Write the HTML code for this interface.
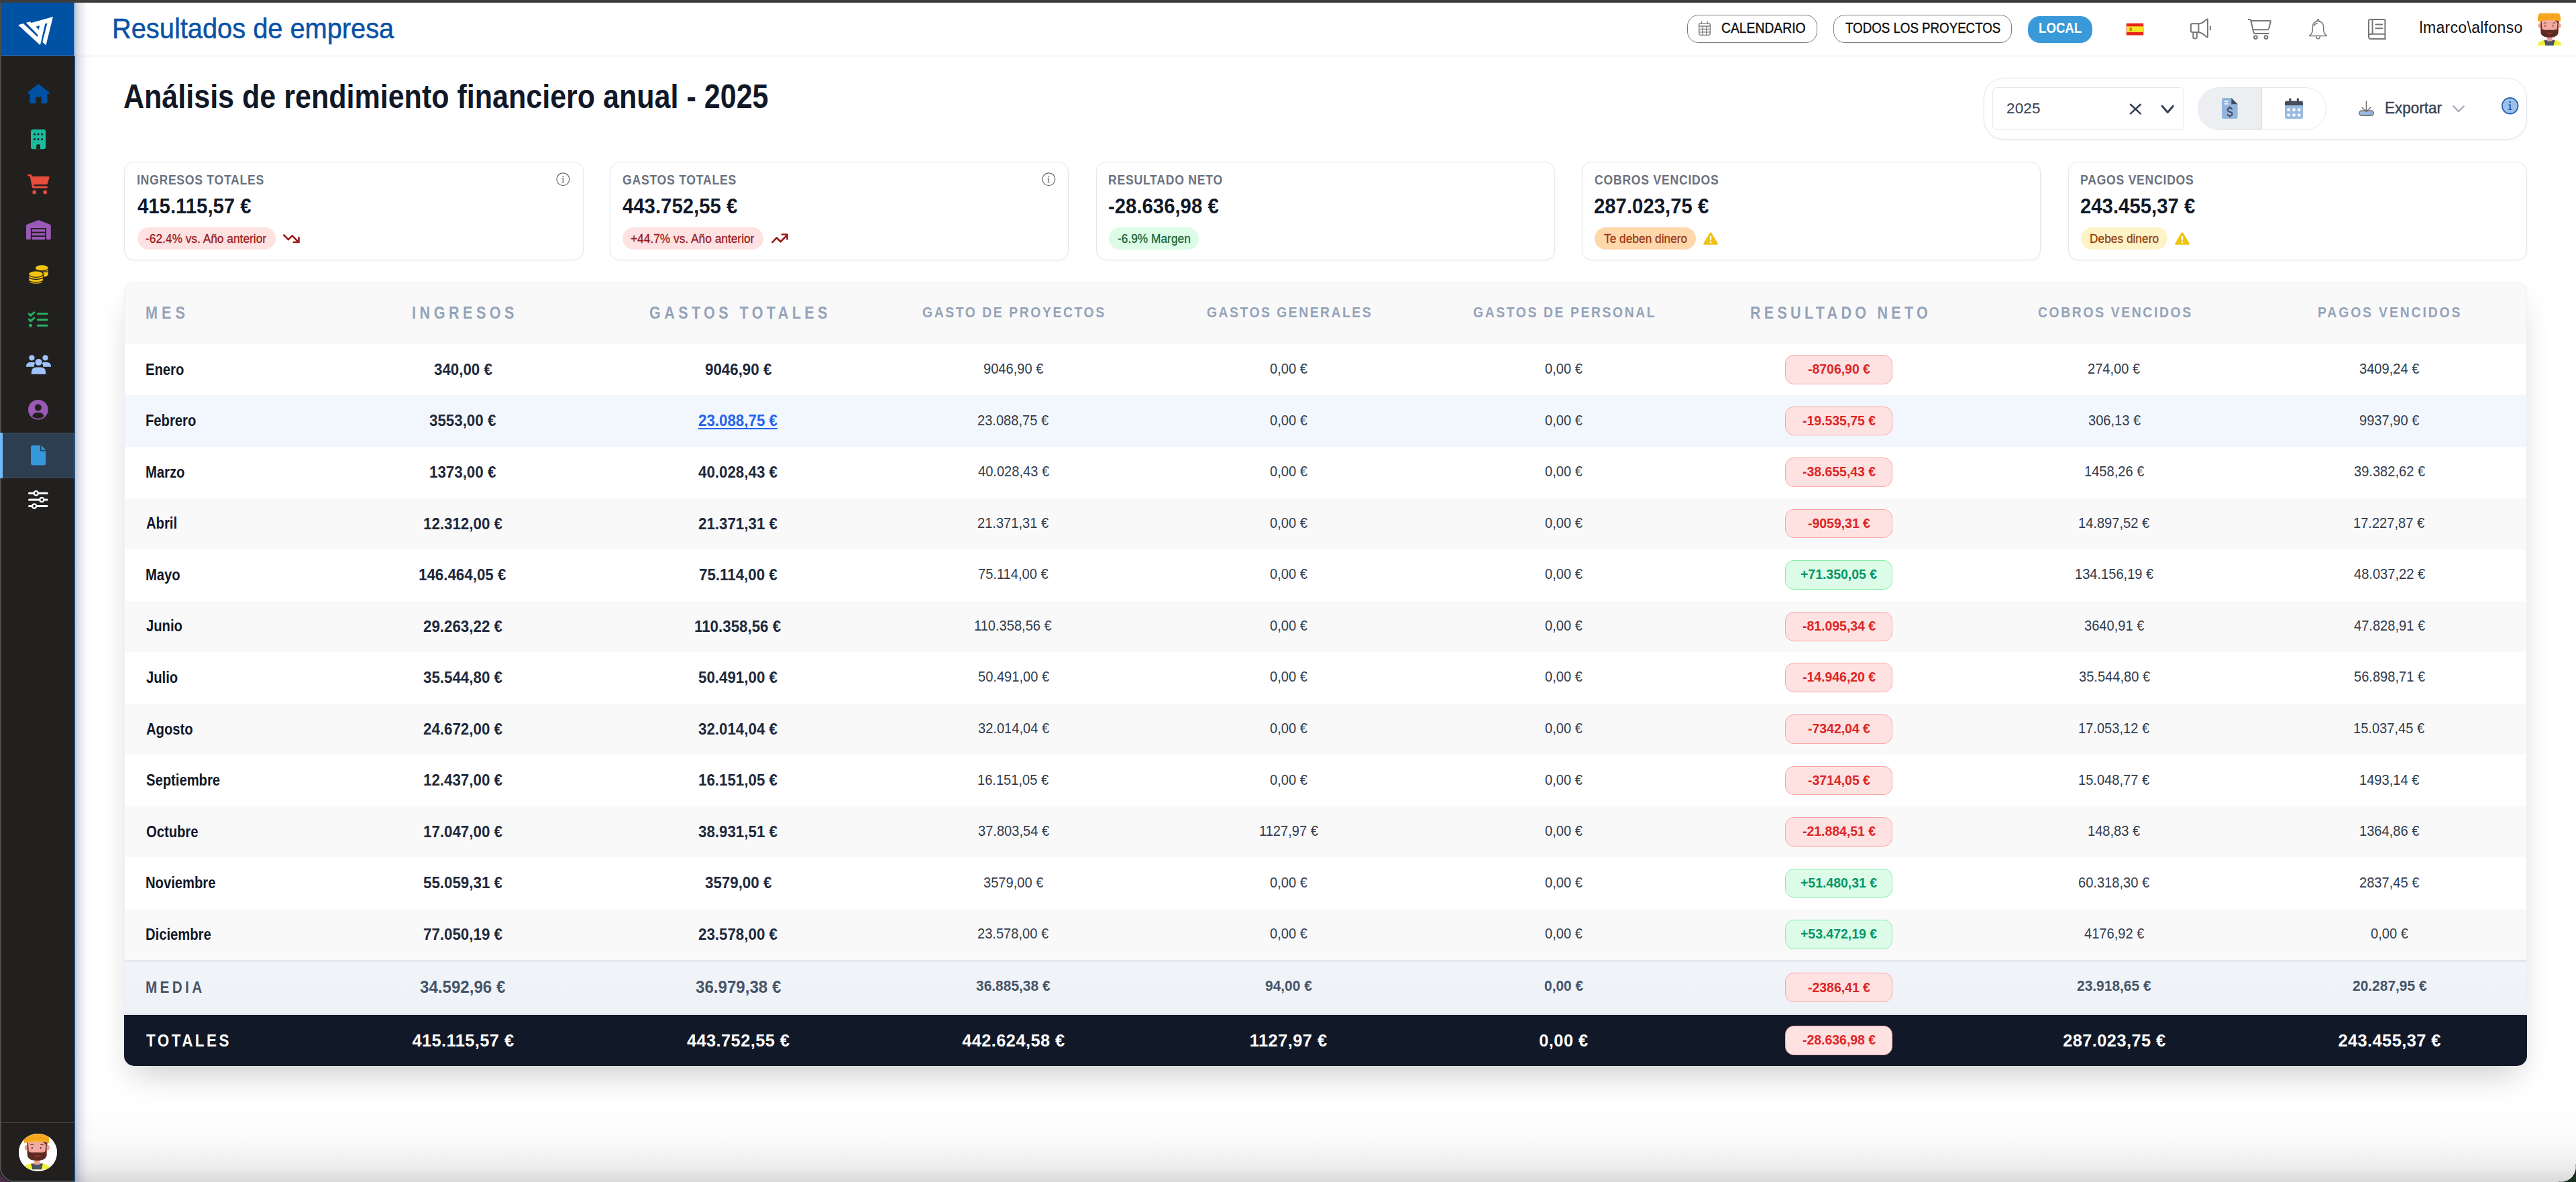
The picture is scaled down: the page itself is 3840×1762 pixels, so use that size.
<!DOCTYPE html>
<html><head><meta charset="utf-8"><title>Resultados de empresa</title>
<style>
*{box-sizing:border-box;margin:0;padding:0}
html,body{width:3840px;height:1762px;overflow:hidden;background:#fff;font-family:"Liberation Sans",sans-serif}
.a{position:absolute}
.t{position:absolute;white-space:nowrap;line-height:1}
svg{position:absolute;overflow:visible}
</style></head><body>
<div class="a" style="left:0;top:0;width:3840px;height:4px;background:#3c3c3c"></div>
<div class="a" style="left:0;top:4px;width:2px;height:1758px;background:#4d4d4d"></div>
<div class="a" style="left:2px;top:4px;width:109px;height:79px;background:#0052a5"></div>
<div class="a" style="left:2px;top:82px;width:109px;height:1.2px;background:#2a6fc0"></div>
<div class="a" style="left:2px;top:83px;width:109px;height:1677px;background:#22201f"></div>
<div class="a" style="left:0;top:1759.8px;width:111px;height:2.2px;background:#4d4d4d"></div>
<div class="a" style="left:110.5px;top:83px;width:1.5px;height:1679px;background:#1f64b8"></div>
<div class="a" style="left:112px;top:4px;width:3728px;height:1758px;background:#fff"></div>
<div class="a" style="left:112px;top:82.5px;width:3728px;height:1.5px;background:#e4e4e4"></div>
<div class="a" style="left:112px;top:4px;width:26px;height:1758px;background:linear-gradient(to right,rgba(140,146,175,.5),rgba(170,175,200,.28) 30%,rgba(210,214,228,.1) 65%,rgba(255,255,255,0))"></div>
<div class="a" style="left:112px;top:1650px;width:3728px;height:112px;background:linear-gradient(to bottom,rgba(0,0,0,0),rgba(0,0,0,.02) 45%,rgba(0,0,0,.07) 80%,rgba(0,0,0,.15))"></div>

<svg style="left:25px;top:22px;" width="55" height="48" viewBox="0 0 1354 1182"><polygon fill="#fff" points="50,375 240,320 320,300 480,250 540,295 1330,75 1070,1120 940,1000 850,1110"/>
<g fill="#0052a5"><polygon points="225,305 325,280 775,740 760,810"/>
<polygon points="860,1120 1040,330 1120,305 945,1000"/>
<polygon points="700,440 840,395 810,545"/></g></svg>
<div class="a" style="left:2px;top:645px;width:109px;height:67.7px;background:#2d3e50;box-shadow:inset 0 0 0 1.6px #3a4959"></div>
<div class="a" style="left:0;top:645px;width:4px;height:67.7px;background:#72b9f7"></div>
<svg style="left:41px;top:125.4px;" width="32.6" height="29.2" viewBox="0 0 32.6 29.2"><path fill="#0052a5" d="M16.3,0 L32.2,12.6 Q33.2,13.6 32,14.8 L29.3,14.8 L29.3,27 Q29.3,29.2 27.1,29.2 L20.6,29.2 L20.6,19.4 L12.2,19.4 L12.2,29.2 L5.6,29.2 Q3.4,29.2 3.4,27 L3.4,14.8 L0.8,14.8 Q-0.6,13.6 0.5,12.6 Z"/></svg>
<svg style="left:46.4px;top:192.6px;" width="22.1" height="29.2" viewBox="0 0 22.1 29.2"><rect x="0" y="0" width="22.1" height="29.2" rx="3" fill="#1abc9c"/><g fill="#22201f"><circle cx="5.6" cy="7.1" r="1.6"/><circle cx="11" cy="7.1" r="1.6"/><circle cx="16.6" cy="7.1" r="1.6"/><circle cx="5.6" cy="14.5" r="1.6"/><circle cx="11" cy="14.5" r="1.6"/><circle cx="16.6" cy="14.5" r="1.6"/><path d="M8.2,29.2 L8.2,24.5 Q8.2,21.9 11,21.9 Q14,21.9 14,24.5 L14,29.2 Z"/></g></svg>
<svg style="left:41px;top:260.4px;" width="32.6" height="29.4" viewBox="0 0 32.6 29.4"><g fill="#e74c3c"><path d="M0,1.3 Q0,0 1.4,0 L4.6,0 Q6,0 6.3,1.5 L6.6,3.1 L31.3,3.1 Q33,3.1 32.5,4.8 L30,13.4 Q29.6,15 28,15 L9.2,15 L9.7,17.6 L28.5,17.6 Q30,17.6 30,19 Q30,20.4 28.5,20.4 L8.6,20.4 Q7.2,20.4 6.9,19 L3.6,2.7 L1.4,2.7 Q0,2.7 0,1.3 Z"/><circle cx="10.2" cy="26.4" r="2.9"/><circle cx="26.2" cy="26.4" r="2.9"/></g></svg>
<svg style="left:38.8px;top:327.7px;" width="36.8" height="29.2" viewBox="0 0 36.8 29.2"><path fill="#9b59b6" d="M18.4,0 L35.3,6.5 Q36.8,7.2 36.8,8.8 L36.8,27.2 Q36.8,29.2 34.8,29.2 L32,29.2 Q30,29.2 30,27.2 L30,12 L6.8,12 L6.8,27.2 Q6.8,29.2 4.8,29.2 L2,29.2 Q0,29.2 0,27.2 L0,8.8 Q0,7.2 1.5,6.5 Z"/><g fill="#9b59b6"><rect x="8.6" y="13.8" width="19.6" height="3.6" rx="0.6"/><rect x="8.6" y="19.4" width="19.6" height="3.6" rx="0.6"/><rect x="8.6" y="25" width="19.6" height="4.2" rx="0.6"/></g></svg>
<svg style="left:42.3px;top:394.2px;" width="30.5" height="29.8" viewBox="0 0 30.5 29.8"><g fill="#f1c40f" stroke="#22201f" stroke-width="1.3"><path d="M10,6 Q10,1 20.3,0.6 Q30.5,1 30.5,6 L30.5,14.5 Q30.5,18.5 24,19.5 L10,12 Z"/><ellipse cx="20.3" cy="5.3" rx="10.2" ry="4.6"/><path d="M10,11 L30.5,11" fill="none"/><path d="M0.6,15 Q0.6,9.8 11.5,9.6 Q22.5,9.8 22.5,15 L22.5,24.2 Q22.5,29.4 11.5,29.4 Q0.6,29.4 0.6,24.2 Z"/><ellipse cx="11.5" cy="14.6" rx="11" ry="4.8"/><path d="M0.6,20.2 Q11.5,24.8 22.5,20.2" fill="none"/><path d="M0.6,24.8 Q11.5,29 22.5,24.8" fill="none"/></g></svg>
<svg style="left:42.3px;top:464.6px;" width="29.7" height="23" viewBox="0 0 29.7 23"><g stroke="#27ae60" stroke-width="3.1" stroke-linecap="round" fill="none"><path d="M1.3,2.8 L3.8,5.2 L8.8,0.8"/><path d="M1.3,11.2 L3.8,13.6 L8.8,9.2"/><path d="M14.5,2.8 L28.2,2.8"/><path d="M14.5,11.5 L28.2,11.5"/><path d="M14.5,20.3 L28.2,20.3"/></g><circle cx="3.4" cy="20.3" r="2.5" fill="#27ae60"/></svg>
<svg style="left:39px;top:529px;" width="37" height="28.7" viewBox="0 0 37 28.7"><g fill="#a0c4ff"><circle cx="8.4" cy="4.4" r="4.2"/><circle cx="28.6" cy="4.4" r="4.2"/><path d="M0,17.5 Q0,11 6,11 L11,11 Q12.5,11 13.2,12 Q11.8,14.5 11.8,17.8 L1,17.8 Q0,17.8 0,17.5 Z"/><path d="M37,17.5 Q37,11 31,11 L26,11 Q24.5,11 23.8,12 Q25.2,14.5 25.2,17.8 L36,17.8 Q37,17.8 37,17.5 Z"/><circle cx="18.5" cy="10.9" r="5"/><path d="M7.7,27.3 Q7.7,18.5 15,18.5 L22,18.5 Q29.3,18.5 29.3,27.3 Q29.3,28.7 28,28.7 L9,28.7 Q7.7,28.7 7.7,27.3 Z"/></g></svg>
<svg style="left:42.3px;top:595.6px;" width="29.7" height="29.7" viewBox="0 0 29.7 29.7"><circle cx="14.85" cy="14.85" r="14.85" fill="#9b59b6"/><circle cx="14.85" cy="11.6" r="5" fill="#22201f"/><path d="M6,24.8 Q8,19.2 12.5,19 L17.2,19 Q21.7,19.2 23.7,24.8 Q19.9,27.9 14.85,27.9 Q9.8,27.9 6,24.8 Z" fill="#22201f"/></svg>
<svg style="left:46.4px;top:663.6px;" width="22.3" height="29.4" viewBox="0 0 22.3 29.4"><path fill="#3498db" d="M2.8,0 L13.8,0 L13.8,7.2 Q13.8,8.5 15.1,8.5 L22.3,8.5 L22.3,26.6 Q22.3,29.4 19.5,29.4 L2.8,29.4 Q0,29.4 0,26.6 L0,2.8 Q0,0 2.8,0 Z"/><path fill="#3498db" d="M15.6,0 L22.3,6.7 L15.6,6.7 Z"/></svg>
<svg style="left:42.3px;top:732px;" width="29.7" height="26.3" viewBox="0 0 29.7 26.3"><g stroke="#fff" stroke-width="3" stroke-linecap="round" fill="none"><path d="M1.5,3.3 L28.2,3.3"/><path d="M1.5,13 L28.2,13"/><path d="M1.5,22.5 L28.2,22.5"/></g><g fill="#22201f" stroke="#fff" stroke-width="2.4"><circle cx="11.8" cy="3.3" r="3.1"/><circle cx="20.3" cy="13" r="3.1"/><circle cx="9.1" cy="22.5" r="3.1"/></g></svg>
<div class="a" style="left:2px;top:1672.5px;width:109px;height:1.2px;background:#474544"></div>
<div class="a" style="left:28px;top:1689.5px;width:56.5px;height:56.5px;border-radius:50%;background:#fff;overflow:hidden"><svg style="left:0;top:0" width="56.5" height="56.5" viewBox="0 0 60 60"><rect width="60" height="60" fill="#fff"/><g transform="translate(-6.9,-5.1) scale(1.17)"><path d="M12.7,52.8 Q13.5,47 20,45.2 L27,44.6 L34.5,44.6 L41,45.2 Q47.5,47 48.2,52.8 Z" fill="#eef03a"/><path d="M23,44.8 L38,44.8 L36,52.8 L25,52.8 Z" fill="#4b5166"/><path d="M23,44.8 L25,52.8 M38,44.8 L36,52.8" stroke="#2d3140" stroke-width="0.8"/><rect x="26.9" y="38" width="7.6" height="8.4" rx="1" fill="#ec9f93"/><ellipse cx="16.2" cy="23.2" rx="2.4" ry="3.4" fill="#ec9f93"/><ellipse cx="45.2" cy="23.2" rx="2.4" ry="3.4" fill="#ec9f93"/><path d="M17.3,15 L44.2,15 L44.2,31 Q44.2,40 30.7,40 Q17.3,40 17.3,31 Z" fill="#f2ab9e"/><circle cx="22" cy="27.5" r="2.4" fill="#f49a92" opacity=".7"/><circle cx="38" cy="27.5" r="2.4" fill="#f49a92" opacity=".7"/><path d="M17.3,16 L18.6,16 L19.3,28 Q21,30.6 30.5,29.5 Q40,30.6 41.8,28 L42.6,18 L43.6,17 L43.6,33 Q43,40.8 30.5,40.8 Q18,40.8 17.5,33 Z" fill="#5b2b22"/><path d="M38.6,16 Q42,12.8 44.7,14 L44.2,21 Q41.5,17.5 38.6,16 Z" fill="#5b2b22"/><path d="M27.5,34 Q30.5,35.6 33.5,34" stroke="#c0392b" stroke-width="1.1" fill="none"/><path d="M21.7,19.6 Q23.7,18 25.7,19.6 M35.3,19.6 Q37.3,18 39.3,19.6" stroke="#5b2b22" stroke-width="1" fill="none"/><ellipse cx="24" cy="23.6" rx="0.9" ry="1.2" fill="#3a3550"/><ellipse cx="35.6" cy="23.6" rx="0.9" ry="1.2" fill="#3a3550"/><path d="M13,17.2 Q12.6,9 15,5.8 Q15.6,4.8 17,4.8 L43.5,4.8 Q45,4.8 45.6,6 Q47.3,9.5 47,16.8 Q30,13.2 13,17.2 Z" fill="#f7a91e"/><path d="M13.2,12 Q30,9.6 46.8,12" stroke="#e8951a" stroke-width="0.7" fill="none"/><path d="M35,4.8 L35.4,10.8" stroke="#e8951a" stroke-width="0.7"/></g></svg></div>
<div class="a" style="left:0;top:1736px;width:26px;height:26px;background:radial-gradient(circle at 22px 4px,#22201f 0,#22201f 20px,#4d4d4d 20.6px,#4d4d4d 22px,#0d0d0d 22.8px,#4f2c4a 24px)"></div>

<div class="t" style="left:166.56px;top:22.05px;font-size:42px;font-weight:400;color:#0a52a6;letter-spacing:0.000px;transform:scaleX(0.9474);transform-origin:0 0;-webkit-text-stroke:0.5px #0a52a6;">Resultados de empresa</div>
<div class="a" style="left:2515px;top:22.3px;width:194px;height:42px;border:1.4px solid #7a7a7a;border-radius:17px"></div>
<svg style="left:2532px;top:31.8px;" width="18" height="21" viewBox="0 0 18 21"><g fill="none" stroke="#777" stroke-width="1.3"><rect x="0.7" y="2.8" width="16.6" height="17.5" rx="2.5"/><path d="M4.5,0 L4.5,3.5 M13.5,0 L13.5,3.5 M0.7,7 L17.3,7 M0.7,11.4 L17.3,11.4 M0.7,15.8 L17.3,15.8 M6.2,7 L6.2,20.3 M11.8,7 L11.8,20.3"/></g></svg>
<div class="t" style="left:2566.10px;top:31.80px;font-size:21.5px;font-weight:400;color:#111;letter-spacing:0.000px;transform:scaleX(0.8982);transform-origin:0 0;-webkit-text-stroke:0.4px #111;">CALENDARIO</div>
<div class="a" style="left:2733px;top:22.3px;width:265.5px;height:42px;border:1.4px solid #7a7a7a;border-radius:17px"></div>
<div class="t" style="left:2750.60px;top:31.80px;font-size:21.5px;font-weight:400;color:#111;letter-spacing:0.000px;transform:scaleX(0.8707);transform-origin:0 0;-webkit-text-stroke:0.4px #111;">TODOS LOS PROYECTOS</div>
<div class="a" style="left:3022.8px;top:24px;width:96.5px;height:39.8px;background:#3a9ad9;border-radius:18px"></div>
<div class="t" style="left:3038.75px;top:31.38px;font-size:22px;font-weight:700;color:#fff;letter-spacing:0.000px;transform:scaleX(0.8476);transform-origin:0 0;">LOCAL</div>
<svg style="left:3170px;top:34.8px;" width="25" height="17.2" viewBox="0 0 25 17.2"><rect x="0" y="0" width="25" height="17.2" fill="#e8231c"/><rect x="0" y="4.3" width="25" height="8.6" fill="#f5e526"/><rect x="4.5" y="6" width="3.5" height="5" fill="#c9533a" opacity=".7"/><rect x="0" y="0" width="25" height="17.2" fill="none" stroke="#d43" stroke-width="0.6"/></svg>
<svg style="left:3264.9px;top:28.2px;" width="31" height="30.5" viewBox="0 0 31 30.5"><g fill="none" stroke="#767676" stroke-width="2" stroke-linejoin="round" stroke-linecap="round"><path d="M3.2,7.2 L12.4,7.2 L12.4,20 L3.2,20 Q0.9,20 0.9,17.7 L0.9,9.5 Q0.9,7.2 3.2,7.2 Z"/><path d="M12.4,7.2 Q17.8,7 21.5,3.2 L24.2,0.9 Q26,0 26,2 L26,26 Q26,28 24.2,27.1 L21.5,24.6 Q17.8,20.8 12.4,20"/><path d="M4.3,20 L4.3,27.5 Q4.3,29.5 6.6,29.5 Q9.8,29.5 9.8,27.5 L9.8,20"/><path d="M29.9,11.6 L29.9,16.5"/></g></svg>
<svg style="left:3350.7px;top:27.8px;" width="34.5" height="31" viewBox="0 0 34.5 31"><g fill="none" stroke="#767676" stroke-width="2" stroke-linejoin="round" stroke-linecap="round"><path d="M0.6,0.9 L2.8,0.9 Q3.8,0.9 4.3,2.3 L8.4,20.6 Q8.9,21.9 10.4,21.9 L30.5,21.9"/><path d="M4.4,3 L33.2,3 Q34,3 33.8,4.2 L31.2,14.3 Q30.6,16.2 28.7,16.2 L8.9,16.2"/><circle cx="11.4" cy="27.6" r="2.4"/><circle cx="27" cy="27.6" r="2.4"/></g></svg>
<svg style="left:3442px;top:28.2px;" width="27" height="30.7" viewBox="0 0 27 30.7"><g fill="none" stroke="#767676" stroke-width="1.5" stroke-linejoin="round" stroke-linecap="round"><path d="M13.5,3.5 Q5.5,4 5.3,12.5 L5.3,17 Q5,22 0.6,25.5 L26.4,25.5 Q22,22 21.7,17 L21.7,12.5 Q21.5,4 13.5,3.5 Z"/><path d="M12.2,3.2 Q12.2,1 13.5,1 Q14.8,1 14.8,3.2"/><path d="M10.6,26.6 Q11.5,29.9 13.5,29.9 Q15.5,29.9 16.4,26.6"/><path d="M8,10.2 Q9,7 12.2,6.8"/></g></svg>
<svg style="left:3529.7px;top:27.8px;" width="27" height="31" viewBox="0 0 27 31"><g fill="none" stroke="#767676" stroke-width="2" stroke-linejoin="round" stroke-linecap="round"><path d="M25.4,22.8 L25.4,2.8 Q25.4,1 23.6,1 L3.4,1 Q1,1 1,3.4 L1,26.8 Q1,30 4,30 L26,30"/><path d="M1,25.5 Q1,22.8 4,22.8 L25.4,22.8 L25.4,30"/><path d="M6.6,1 L6.6,22.8"/><path d="M11.2,8.6 L21.2,8.6 M11.2,14.2 L21.2,14.2"/></g></svg>
<div class="t" style="left:3606.50px;top:29.53px;font-size:23px;font-weight:400;color:#111;letter-spacing:0.325px;">lmarco\alfonso</div>
<div class="a" style="left:3770px;top:15px;width:60px;height:60px;overflow:hidden"><svg style="left:0;top:0" width="60" height="60" viewBox="0 0 60 60"><path d="M12.7,52.8 Q13.5,47 20,45.2 L27,44.6 L34.5,44.6 L41,45.2 Q47.5,47 48.2,52.8 Z" fill="#eef03a"/><path d="M23,44.8 L38,44.8 L36,52.8 L25,52.8 Z" fill="#4b5166"/><path d="M23,44.8 L25,52.8 M38,44.8 L36,52.8" stroke="#2d3140" stroke-width="0.8"/><rect x="26.9" y="38" width="7.6" height="8.4" rx="1" fill="#ec9f93"/><ellipse cx="16.2" cy="23.2" rx="2.4" ry="3.4" fill="#ec9f93"/><ellipse cx="45.2" cy="23.2" rx="2.4" ry="3.4" fill="#ec9f93"/><path d="M17.3,15 L44.2,15 L44.2,31 Q44.2,40 30.7,40 Q17.3,40 17.3,31 Z" fill="#f2ab9e"/><circle cx="22" cy="27.5" r="2.4" fill="#f49a92" opacity=".7"/><circle cx="38" cy="27.5" r="2.4" fill="#f49a92" opacity=".7"/><path d="M17.3,16 L18.6,16 L19.3,28 Q21,30.6 30.5,29.5 Q40,30.6 41.8,28 L42.6,18 L43.6,17 L43.6,33 Q43,40.8 30.5,40.8 Q18,40.8 17.5,33 Z" fill="#5b2b22"/><path d="M38.6,16 Q42,12.8 44.7,14 L44.2,21 Q41.5,17.5 38.6,16 Z" fill="#5b2b22"/><path d="M27.5,34 Q30.5,35.6 33.5,34" stroke="#c0392b" stroke-width="1.1" fill="none"/><path d="M21.7,19.6 Q23.7,18 25.7,19.6 M35.3,19.6 Q37.3,18 39.3,19.6" stroke="#5b2b22" stroke-width="1" fill="none"/><ellipse cx="24" cy="23.6" rx="0.9" ry="1.2" fill="#3a3550"/><ellipse cx="35.6" cy="23.6" rx="0.9" ry="1.2" fill="#3a3550"/><path d="M13,17.2 Q12.6,9 15,5.8 Q15.6,4.8 17,4.8 L43.5,4.8 Q45,4.8 45.6,6 Q47.3,9.5 47,16.8 Q30,13.2 13,17.2 Z" fill="#f7a91e"/><path d="M13.2,12 Q30,9.6 46.8,12" stroke="#e8951a" stroke-width="0.7" fill="none"/><path d="M35,4.8 L35.4,10.8" stroke="#e8951a" stroke-width="0.7"/></svg></div>
<div class="t" style="left:183.64px;top:119.08px;font-size:50px;font-weight:700;color:#111827;letter-spacing:0.000px;transform:scaleX(0.8608);transform-origin:0 0;">Análisis de rendimiento financiero anual - 2025</div>
<div class="a" style="left:2957.4px;top:116px;width:810px;height:91.5px;border:1.4px solid #e3e8ef;border-radius:30px;background:#fff;box-shadow:0 1px 3px rgba(0,0,0,.07)"></div>
<div class="a" style="left:2970px;top:130px;width:285.5px;height:63.5px;border:1.3px solid #e5e7eb;border-radius:7px;background:#fff"></div>
<div class="t" style="left:2991.00px;top:150.95px;font-size:22.5px;font-weight:400;color:#374151;letter-spacing:0.153px;">2025</div>
<svg style="left:3174.7px;top:155px;" width="16.7" height="15.2" viewBox="0 0 16.7 15.2"><path d="M1,0.8 L15.7,14.4 M15.7,0.8 L1,14.4" stroke="#374151" stroke-width="2.6" stroke-linecap="round" fill="none"/></svg>
<svg style="left:3222px;top:157.4px;" width="18.5" height="11.6" viewBox="0 0 18.5 11.6"><path d="M1.2,1.2 L9.25,10.4 L17.3,1.2" stroke="#374151" stroke-width="3" stroke-linecap="round" stroke-linejoin="round" fill="none"/></svg>
<div class="a" style="left:3275.6px;top:130px;width:192.4px;height:63.5px;border:1.3px solid #e5e7eb;border-radius:32px;background:#fff;overflow:hidden"><div class="a" style="left:0;top:0;width:95.8px;height:63.5px;background:#eceef1;border-right:1.3px solid #dcdfe4"></div></div>
<svg style="left:3312px;top:145.7px;" width="23.6" height="31" viewBox="0 0 23.6 31"><path fill="#92b5de" d="M3,0 L14.3,0 L23.6,9.2 L23.6,28 Q23.6,31 20.6,31 L3,31 Q0,31 0,28 L0,3 Q0,0 3,0 Z"/><path fill="#444d59" d="M14.3,0 L23.6,9.2 L14.3,9.2 Z"/><g stroke="#eef3f9" stroke-width="2" stroke-linecap="round"><path d="M4.6,5 L8.8,5 M4.6,8.7 L8.8,8.7"/></g><g fill="none" stroke="#444d59" stroke-width="1.9" stroke-linecap="round"><path d="M15.2,16.6 Q14.6,15 12,15 Q8.6,15 8.6,17.8 Q8.6,20.2 12,20.8 Q15.6,21.5 15.6,24 Q15.6,26.6 12,26.6 Q9.2,26.6 8.4,24.8"/><path d="M12,13.2 L12,15 M12,26.6 L12,28.2"/></g></svg>
<svg style="left:3406.4px;top:145.7px;" width="27.6" height="31" viewBox="0 0 27.6 31"><path fill="#444d59" d="M3,4.5 L24.6,4.5 Q27,4.5 27,7.5 L27,11.4 L0,11.4 L0,7.5 Q0,4.5 3,4.5 Z"/><rect x="6.3" y="0.3" width="3.1" height="6.5" rx="1.4" fill="#444d59"/><rect x="17.8" y="0.3" width="3.1" height="6.5" rx="1.4" fill="#444d59"/><path fill="#99bbe0" d="M0,11.3 L27,11.3 L27,28 Q27,31 24,31 L3,31 Q0,31 0,28 Z"/><g fill="#fff"><rect x="3.6" y="15.5" width="4.2" height="4.2" rx="0.8"/><rect x="11.4" y="15.5" width="4.2" height="4.2" rx="0.8"/><rect x="19.1" y="15.5" width="4.2" height="4.2" rx="0.8"/><rect x="3.6" y="23.4" width="4.2" height="4.2" rx="0.8"/><rect x="11.4" y="23.4" width="4.2" height="4.2" rx="0.8"/><rect x="19.1" y="23.4" width="4.2" height="4.2" rx="0.8"/></g></svg>
<svg style="left:3516px;top:150px;" width="23" height="23" viewBox="0 0 23 23"><rect x="0.9" y="14.9" width="21.4" height="7.3" rx="3.6" fill="#99bbe0" stroke="#6e6e6e" stroke-width="1.5"/><g stroke="#6e6e6e" stroke-width="1.5" fill="none" stroke-linecap="round" stroke-linejoin="round"><path d="M11.4,0.7 L11.4,16.4"/><path d="M5.1,10.2 L11.4,16.4 L17.7,10.2"/></g><rect x="17.3" y="18" width="1.6" height="1.2" fill="#555"/></svg>
<div class="t" style="left:3555.06px;top:148.68px;font-size:24px;font-weight:400;color:#374151;letter-spacing:0.000px;transform:scaleX(0.9363);transform-origin:0 0;-webkit-text-stroke:0.45px #374151;">Exportar</div>
<svg style="left:3655.5px;top:157.4px;" width="18" height="10.6" viewBox="0 0 18 10.6"><path d="M1.2,1.2 L9.0,9.4 L16.8,1.2" stroke="#9ca3af" stroke-width="2" stroke-linecap="round" stroke-linejoin="round" fill="none"/></svg>
<svg style="left:3728.6px;top:145.4px;" width="25.4" height="25.4" viewBox="0 0 25.4 25.4"><circle cx="12.7" cy="12.7" r="11.8" fill="#9ec0e8" stroke="#1f5fb4" stroke-width="1.8"/><g fill="#1f5fb4"><circle cx="12.7" cy="7.2" r="1.3"/><path d="M10.3,10.6 L13.8,10.6 L13.8,17.4 L15.4,17.4 L15.4,19 L10.2,19 L10.2,17.4 L11.8,17.4 L11.8,12.2 L10.3,12.2 Z"/></g></svg>
<div class="a" style="left:185px;top:240.5px;width:684.5px;height:147.5px;border:1.4px solid #e5e7eb;border-radius:15px;background:#fff;box-shadow:0 1px 3px rgba(0,0,0,.05)"></div>
<div class="t" style="left:203.72px;top:257.87px;font-size:20px;font-weight:700;color:#6b7280;letter-spacing:0.824px;transform:scaleX(0.8800);transform-origin:0 0;">INGRESOS TOTALES</div>
<div class="t" style="left:204.60px;top:292.46px;font-size:31px;font-weight:700;color:#111827;letter-spacing:0.000px;transform:scaleX(0.9461);transform-origin:0 0;">415.115,57 €</div>
<div class="a" style="left:204.6px;top:339px;width:206.8px;height:33px;border-radius:17px;background:#fee2e2"></div>
<div class="t" style="left:217.20px;top:345.92px;font-size:19px;font-weight:400;color:#991b1b;letter-spacing:0.000px;transform:scaleX(0.9116);transform-origin:0 0;-webkit-text-stroke:0.3px currentColor;color:#991b1b;">-62.4% vs. Año anterior</div>
<svg style="left:421.6px;top:349px;" width="25.2" height="13.5" viewBox="0 0 25.2 13.5"><g fill="none" stroke="#991b1b" stroke-width="2.6" stroke-linecap="round" stroke-linejoin="round"><path d="M1.3,1.5 L7.8,8.2 L13.6,2.4 L22.5,11.3"/><path d="M15.8,12 L23.5,12 L23.5,5"/></g></svg>
<svg style="left:828.8px;top:257.2px;" width="20.7" height="20.4" viewBox="0 0 20.7 20.4"><circle cx="10.35" cy="10.2" r="9.4" fill="none" stroke="#6b6b6b" stroke-width="1.3"/><g fill="#6b6b6b"><circle cx="10.35" cy="5.9" r="1"/><path d="M8.6,8.6 L11.1,8.6 L11.1,14 L12.3,14 L12.3,15.1 L8.5,15.1 L8.5,14 L9.7,14 L9.7,9.7 L8.6,9.7 Z"/></g></svg>
<div class="a" style="left:908.7px;top:240.5px;width:684.5px;height:147.5px;border:1.4px solid #e5e7eb;border-radius:15px;background:#fff;box-shadow:0 1px 3px rgba(0,0,0,.05)"></div>
<div class="t" style="left:928.30px;top:257.87px;font-size:20px;font-weight:700;color:#6b7280;letter-spacing:0.854px;transform:scaleX(0.8800);transform-origin:0 0;">GASTOS TOTALES</div>
<div class="t" style="left:928.30px;top:292.46px;font-size:31px;font-weight:700;color:#111827;letter-spacing:0.000px;transform:scaleX(0.9461);transform-origin:0 0;">443.752,55 €</div>
<div class="a" style="left:928.3000000000001px;top:339px;width:210.2px;height:33px;border-radius:17px;background:#fee2e2"></div>
<div class="t" style="left:940.43px;top:345.92px;font-size:19px;font-weight:400;color:#991b1b;letter-spacing:0.000px;transform:scaleX(0.9116);transform-origin:0 0;-webkit-text-stroke:0.3px currentColor;color:#991b1b;">+44.7% vs. Año anterior</div>
<svg style="left:1149.7px;top:348px;" width="25.2" height="14.7" viewBox="0 0 25.2 14.7"><g fill="none" stroke="#991b1b" stroke-width="2.6" stroke-linecap="round" stroke-linejoin="round"><path d="M1.3,13.2 L7.8,6.5 L13.6,12.3 L22.5,3.4"/><path d="M15.8,1.5 L23.5,1.5 L23.5,8.5"/></g></svg>
<svg style="left:1552.5px;top:257.2px;" width="20.7" height="20.4" viewBox="0 0 20.7 20.4"><circle cx="10.35" cy="10.2" r="9.4" fill="none" stroke="#6b6b6b" stroke-width="1.3"/><g fill="#6b6b6b"><circle cx="10.35" cy="5.9" r="1"/><path d="M8.6,8.6 L11.1,8.6 L11.1,14 L12.3,14 L12.3,15.1 L8.5,15.1 L8.5,14 L9.7,14 L9.7,9.7 L8.6,9.7 Z"/></g></svg>
<div class="a" style="left:1633.6px;top:240.5px;width:684.5px;height:147.5px;border:1.4px solid #e5e7eb;border-radius:15px;background:#fff;box-shadow:0 1px 3px rgba(0,0,0,.05)"></div>
<div class="t" style="left:1652.32px;top:257.87px;font-size:20px;font-weight:700;color:#6b7280;letter-spacing:0.853px;transform:scaleX(0.8800);transform-origin:0 0;">RESULTADO NETO</div>
<div class="t" style="left:1652.25px;top:292.46px;font-size:31px;font-weight:700;color:#111827;letter-spacing:0.000px;transform:scaleX(0.9461);transform-origin:0 0;">-28.636,98 €</div>
<div class="a" style="left:1653.1999999999998px;top:339px;width:133.7px;height:33px;border-radius:17px;background:#dcfce7"></div>
<div class="t" style="left:1665.92px;top:345.92px;font-size:19px;font-weight:400;color:#991b1b;letter-spacing:0.000px;transform:scaleX(0.9116);transform-origin:0 0;-webkit-text-stroke:0.3px currentColor;color:#166534;">-6.9% Margen</div>
<div class="a" style="left:2357.7px;top:240.5px;width:684.5px;height:147.5px;border:1.4px solid #e5e7eb;border-radius:15px;background:#fff;box-shadow:0 1px 3px rgba(0,0,0,.05)"></div>
<div class="t" style="left:2377.30px;top:257.87px;font-size:20px;font-weight:700;color:#6b7280;letter-spacing:0.866px;transform:scaleX(0.8800);transform-origin:0 0;">COBROS VENCIDOS</div>
<div class="t" style="left:2376.35px;top:292.46px;font-size:31px;font-weight:700;color:#111827;letter-spacing:0.000px;transform:scaleX(0.9461);transform-origin:0 0;">287.023,75 €</div>
<div class="a" style="left:2377.2999999999997px;top:339px;width:151px;height:33px;border-radius:17px;background:#fed7aa"></div>
<div class="t" style="left:2390.95px;top:345.92px;font-size:19px;font-weight:400;color:#991b1b;letter-spacing:0.000px;transform:scaleX(0.9116);transform-origin:0 0;-webkit-text-stroke:0.3px currentColor;color:#9a3412;">Te deben dinero</div>
<svg style="left:2539.2999999999997px;top:346px;" width="22" height="19.2" viewBox="0 0 22 19.2"><path fill="#efc20e" d="M11,0.5 Q12,0.5 12.6,1.5 L21.6,16.8 Q22.4,18.7 20.4,18.7 L1.6,18.7 Q-0.4,18.7 0.4,16.8 L9.4,1.5 Q10,0.5 11,0.5 Z"/><g fill="#fff"><rect x="9.8" y="5.6" width="2.4" height="7" rx="1"/><circle cx="11" cy="15.3" r="1.4"/></g></svg>
<div class="a" style="left:3082.7px;top:240.5px;width:684.5px;height:147.5px;border:1.4px solid #e5e7eb;border-radius:15px;background:#fff;box-shadow:0 1px 3px rgba(0,0,0,.05)"></div>
<div class="t" style="left:3101.42px;top:257.87px;font-size:20px;font-weight:700;color:#6b7280;letter-spacing:0.848px;transform:scaleX(0.8800);transform-origin:0 0;">PAGOS VENCIDOS</div>
<div class="t" style="left:3101.35px;top:292.46px;font-size:31px;font-weight:700;color:#111827;letter-spacing:0.000px;transform:scaleX(0.9461);transform-origin:0 0;">243.455,37 €</div>
<div class="a" style="left:3102.2999999999997px;top:339px;width:128.7px;height:33px;border-radius:17px;background:#fef3c7"></div>
<div class="t" style="left:3114.94px;top:345.92px;font-size:19px;font-weight:400;color:#991b1b;letter-spacing:0.000px;transform:scaleX(0.9116);transform-origin:0 0;-webkit-text-stroke:0.3px currentColor;color:#92400e;">Debes dinero</div>
<svg style="left:3241.9999999999995px;top:346px;" width="22" height="19.2" viewBox="0 0 22 19.2"><path fill="#efc20e" d="M11,0.5 Q12,0.5 12.6,1.5 L21.6,16.8 Q22.4,18.7 20.4,18.7 L1.6,18.7 Q-0.4,18.7 0.4,16.8 L9.4,1.5 Q10,0.5 11,0.5 Z"/><g fill="#fff"><rect x="9.8" y="5.6" width="2.4" height="7" rx="1"/><circle cx="11" cy="15.3" r="1.4"/></g></svg>
<div class="a" style="left:185px;top:421px;width:3582px;height:1167.7px;border-radius:15px;box-shadow:0 24px 48px -12px rgba(0,0,0,.2);background:#fff;overflow:hidden">
<div class="a" style="left:0;top:0;width:3582px;height:91.8px;background:#f9f9fa"></div>
<div class="a" style="left:0;top:91.79999999999995px;width:3582px;height:76.55px;background:#ffffff"></div>
<div class="a" style="left:0;top:168.3499999999999px;width:3582px;height:76.55px;background:#f2f7fd"></div>
<div class="a" style="left:0;top:244.89999999999998px;width:3582px;height:76.55px;background:#ffffff"></div>
<div class="a" style="left:0;top:321.44999999999993px;width:3582px;height:76.55px;background:#f9f9fa"></div>
<div class="a" style="left:0;top:398.0px;width:3582px;height:76.55px;background:#ffffff"></div>
<div class="a" style="left:0;top:474.54999999999995px;width:3582px;height:76.55px;background:#f9f9fa"></div>
<div class="a" style="left:0;top:551.0999999999999px;width:3582px;height:76.55px;background:#ffffff"></div>
<div class="a" style="left:0;top:627.6500000000001px;width:3582px;height:76.55px;background:#f9f9fa"></div>
<div class="a" style="left:0;top:704.1999999999998px;width:3582px;height:76.55px;background:#ffffff"></div>
<div class="a" style="left:0;top:780.75px;width:3582px;height:76.55px;background:#f9f9fa"></div>
<div class="a" style="left:0;top:857.3px;width:3582px;height:76.55px;background:#ffffff"></div>
<div class="a" style="left:0;top:933.8499999999999px;width:3582px;height:76.55px;background:#f9f9fa"></div>
<div class="a" style="left:0;top:1010px;width:3582px;height:2.6px;background:#e2e8f0"></div>
<div class="a" style="left:0;top:1012.5999999999999px;width:3582px;height:76.2px;background:linear-gradient(to bottom,#f1f4f9,#eef1f6)"></div>
<div class="a" style="left:0;top:1088.8px;width:3582px;height:2.8px;background:#e3e8ef"></div>
<div class="a" style="left:0;top:1091.6px;width:3582px;height:76.10000000000014px;background:#111827"></div>
</div>
<div class="a" style="left:185px;top:421px;width:3582px;height:1091.6px;border:1.2px solid #edf1f6;border-bottom:none;border-radius:15px 15px 0 0"></div>
<div class="t" style="left:217.14px;top:454.24px;font-size:25px;font-weight:700;color:#94a3b8;letter-spacing:7.122px;transform:scaleX(0.8600);transform-origin:0 0;">MES</div>
<div class="t" style="left:613.76px;top:454.24px;font-size:25px;font-weight:700;color:#94a3b8;letter-spacing:6.469px;transform:scaleX(0.8600);transform-origin:0 0;">INGRESOS</div>
<div class="t" style="left:967.51px;top:454.24px;font-size:25px;font-weight:700;color:#94a3b8;letter-spacing:6.326px;transform:scaleX(0.8600);transform-origin:0 0;">GASTOS TOTALES</div>
<div class="t" style="left:1375.08px;top:455.45px;font-size:22.5px;font-weight:700;color:#94a3b8;letter-spacing:3.001px;transform:scaleX(0.8600);transform-origin:0 0;">GASTO DE PROYECTOS</div>
<div class="t" style="left:1798.58px;top:455.45px;font-size:22.5px;font-weight:700;color:#94a3b8;letter-spacing:2.903px;transform:scaleX(0.8600);transform-origin:0 0;">GASTOS GENERALES</div>
<div class="t" style="left:2195.72px;top:455.45px;font-size:22.5px;font-weight:700;color:#94a3b8;letter-spacing:3.015px;transform:scaleX(0.8600);transform-origin:0 0;">GASTOS DE PERSONAL</div>
<div class="t" style="left:2608.76px;top:454.24px;font-size:25px;font-weight:700;color:#94a3b8;letter-spacing:6.158px;transform:scaleX(0.8600);transform-origin:0 0;">RESULTADO NETO</div>
<div class="t" style="left:3037.57px;top:455.45px;font-size:22.5px;font-weight:700;color:#94a3b8;letter-spacing:3.051px;transform:scaleX(0.8600);transform-origin:0 0;">COBROS VENCIDOS</div>
<div class="t" style="left:3455.26px;top:455.45px;font-size:22.5px;font-weight:700;color:#94a3b8;letter-spacing:3.352px;transform:scaleX(0.8600);transform-origin:0 0;">PAGOS VENCIDOS</div>
<div class="t" style="left:217.13px;top:539.68px;font-size:23.3px;font-weight:700;color:#111827;letter-spacing:0.000px;transform:scaleX(0.8674);transform-origin:0 0;">Enero</div>
<div class="t" style="left:646.58px;top:539.93px;font-size:23px;font-weight:700;color:#1e293b;letter-spacing:0.000px;transform:scaleX(0.9706);transform-origin:0 0;">340,00 €</div>
<div class="t" style="left:1050.62px;top:539.93px;font-size:23px;font-weight:700;color:#1e293b;letter-spacing:0.000px;transform:scaleX(0.9706);transform-origin:0 0;">9046,90 €</div>
<div class="t" style="left:1465.61px;top:539.18px;font-size:22px;font-weight:400;color:#323c4c;letter-spacing:0.000px;transform:scaleX(0.9127);transform-origin:0 0;">9046,90 €</div>
<div class="t" style="left:1893.07px;top:539.18px;font-size:22px;font-weight:400;color:#323c4c;letter-spacing:0.000px;transform:scaleX(0.9127);transform-origin:0 0;">0,00 €</div>
<div class="t" style="left:2303.32px;top:539.18px;font-size:22px;font-weight:400;color:#323c4c;letter-spacing:0.000px;transform:scaleX(0.9127);transform-origin:0 0;">0,00 €</div>
<div class="t" style="left:3112.20px;top:539.18px;font-size:22px;font-weight:400;color:#323c4c;letter-spacing:0.000px;transform:scaleX(0.9127);transform-origin:0 0;">274,00 €</div>
<div class="t" style="left:3517.32px;top:539.18px;font-size:22px;font-weight:400;color:#323c4c;letter-spacing:0.000px;transform:scaleX(0.9127);transform-origin:0 0;">3409,24 €</div>
<div class="a" style="left:2661.375px;top:529.0999999999999px;width:160px;height:43.7px;border:1.3px solid #fca5a5;border-radius:13px;background:#fee2e2"></div>
<div class="t" style="left:2694.97px;top:540.17px;font-size:20px;font-weight:700;color:#dc2626;letter-spacing:0.000px;transform:scaleX(0.9716);transform-origin:0 0;color:#dc2626;">-8706,90 €</div>
<div class="t" style="left:217.13px;top:616.23px;font-size:23.3px;font-weight:700;color:#111827;letter-spacing:0.000px;transform:scaleX(0.8674);transform-origin:0 0;">Febrero</div>
<div class="t" style="left:640.37px;top:616.48px;font-size:23px;font-weight:700;color:#1e293b;letter-spacing:0.000px;transform:scaleX(0.9706);transform-origin:0 0;">3553,00 €</div>
<div class="t" style="left:1041.31px;top:616.48px;font-size:23px;font-weight:700;color:#1e293b;letter-spacing:0.000px;transform:scaleX(0.9706);transform-origin:0 0;color:#2563eb;text-decoration:underline;text-decoration-thickness:1.6px;text-underline-offset:3px;">23.088,75 €</div>
<div class="t" style="left:1457.24px;top:615.73px;font-size:22px;font-weight:400;color:#323c4c;letter-spacing:0.000px;transform:scaleX(0.9127);transform-origin:0 0;">23.088,75 €</div>
<div class="t" style="left:1893.07px;top:615.73px;font-size:22px;font-weight:400;color:#323c4c;letter-spacing:0.000px;transform:scaleX(0.9127);transform-origin:0 0;">0,00 €</div>
<div class="t" style="left:2303.32px;top:615.73px;font-size:22px;font-weight:400;color:#323c4c;letter-spacing:0.000px;transform:scaleX(0.9127);transform-origin:0 0;">0,00 €</div>
<div class="t" style="left:3112.65px;top:615.73px;font-size:22px;font-weight:400;color:#323c4c;letter-spacing:0.000px;transform:scaleX(0.9127);transform-origin:0 0;">306,13 €</div>
<div class="t" style="left:3516.86px;top:615.73px;font-size:22px;font-weight:400;color:#323c4c;letter-spacing:0.000px;transform:scaleX(0.9127);transform-origin:0 0;">9937,90 €</div>
<div class="a" style="left:2661.375px;top:605.6499999999999px;width:160px;height:43.7px;border:1.3px solid #fca5a5;border-radius:13px;background:#fee2e2"></div>
<div class="t" style="left:2686.87px;top:616.72px;font-size:20px;font-weight:700;color:#dc2626;letter-spacing:0.000px;transform:scaleX(0.9716);transform-origin:0 0;color:#dc2626;">-19.535,75 €</div>
<div class="t" style="left:217.13px;top:692.78px;font-size:23.3px;font-weight:700;color:#111827;letter-spacing:0.000px;transform:scaleX(0.8674);transform-origin:0 0;">Marzo</div>
<div class="t" style="left:639.88px;top:693.03px;font-size:23px;font-weight:700;color:#1e293b;letter-spacing:0.000px;transform:scaleX(0.9706);transform-origin:0 0;">1373,00 €</div>
<div class="t" style="left:1041.31px;top:693.03px;font-size:23px;font-weight:700;color:#1e293b;letter-spacing:0.000px;transform:scaleX(0.9706);transform-origin:0 0;">40.028,43 €</div>
<div class="t" style="left:1457.70px;top:692.28px;font-size:22px;font-weight:400;color:#323c4c;letter-spacing:0.000px;transform:scaleX(0.9127);transform-origin:0 0;">40.028,43 €</div>
<div class="t" style="left:1893.07px;top:692.28px;font-size:22px;font-weight:400;color:#323c4c;letter-spacing:0.000px;transform:scaleX(0.9127);transform-origin:0 0;">0,00 €</div>
<div class="t" style="left:2303.32px;top:692.28px;font-size:22px;font-weight:400;color:#323c4c;letter-spacing:0.000px;transform:scaleX(0.9127);transform-origin:0 0;">0,00 €</div>
<div class="t" style="left:3106.61px;top:692.28px;font-size:22px;font-weight:400;color:#323c4c;letter-spacing:0.000px;transform:scaleX(0.9127);transform-origin:0 0;">1458,26 €</div>
<div class="t" style="left:3508.95px;top:692.28px;font-size:22px;font-weight:400;color:#323c4c;letter-spacing:0.000px;transform:scaleX(0.9127);transform-origin:0 0;">39.382,62 €</div>
<div class="a" style="left:2661.375px;top:682.1999999999999px;width:160px;height:43.7px;border:1.3px solid #fca5a5;border-radius:13px;background:#fee2e2"></div>
<div class="t" style="left:2686.87px;top:693.27px;font-size:20px;font-weight:700;color:#dc2626;letter-spacing:0.000px;transform:scaleX(0.9716);transform-origin:0 0;color:#dc2626;">-38.655,43 €</div>
<div class="t" style="left:218.00px;top:769.33px;font-size:23.3px;font-weight:700;color:#111827;letter-spacing:0.000px;transform:scaleX(0.8674);transform-origin:0 0;">Abril</div>
<div class="t" style="left:630.57px;top:769.58px;font-size:23px;font-weight:700;color:#1e293b;letter-spacing:0.000px;transform:scaleX(0.9706);transform-origin:0 0;">12.312,00 €</div>
<div class="t" style="left:1041.31px;top:769.58px;font-size:23px;font-weight:700;color:#1e293b;letter-spacing:0.000px;transform:scaleX(0.9706);transform-origin:0 0;">21.371,31 €</div>
<div class="t" style="left:1457.24px;top:768.83px;font-size:22px;font-weight:400;color:#323c4c;letter-spacing:0.000px;transform:scaleX(0.9127);transform-origin:0 0;">21.371,31 €</div>
<div class="t" style="left:1893.07px;top:768.83px;font-size:22px;font-weight:400;color:#323c4c;letter-spacing:0.000px;transform:scaleX(0.9127);transform-origin:0 0;">0,00 €</div>
<div class="t" style="left:2303.32px;top:768.83px;font-size:22px;font-weight:400;color:#323c4c;letter-spacing:0.000px;transform:scaleX(0.9127);transform-origin:0 0;">0,00 €</div>
<div class="t" style="left:3098.24px;top:768.83px;font-size:22px;font-weight:400;color:#323c4c;letter-spacing:0.000px;transform:scaleX(0.9127);transform-origin:0 0;">14.897,52 €</div>
<div class="t" style="left:3508.49px;top:768.83px;font-size:22px;font-weight:400;color:#323c4c;letter-spacing:0.000px;transform:scaleX(0.9127);transform-origin:0 0;">17.227,87 €</div>
<div class="a" style="left:2661.375px;top:758.7499999999999px;width:160px;height:43.7px;border:1.3px solid #fca5a5;border-radius:13px;background:#fee2e2"></div>
<div class="t" style="left:2694.97px;top:769.82px;font-size:20px;font-weight:700;color:#dc2626;letter-spacing:0.000px;transform:scaleX(0.9716);transform-origin:0 0;color:#dc2626;">-9059,31 €</div>
<div class="t" style="left:217.13px;top:845.88px;font-size:23.3px;font-weight:700;color:#111827;letter-spacing:0.000px;transform:scaleX(0.8674);transform-origin:0 0;">Mayo</div>
<div class="t" style="left:624.37px;top:846.13px;font-size:23px;font-weight:700;color:#1e293b;letter-spacing:0.000px;transform:scaleX(0.9706);transform-origin:0 0;">146.464,05 €</div>
<div class="t" style="left:1041.92px;top:846.13px;font-size:23px;font-weight:700;color:#1e293b;letter-spacing:0.000px;transform:scaleX(0.9706);transform-origin:0 0;">75.114,00 €</div>
<div class="t" style="left:1457.98px;top:845.38px;font-size:22px;font-weight:400;color:#323c4c;letter-spacing:0.000px;transform:scaleX(0.9127);transform-origin:0 0;">75.114,00 €</div>
<div class="t" style="left:1893.07px;top:845.38px;font-size:22px;font-weight:400;color:#323c4c;letter-spacing:0.000px;transform:scaleX(0.9127);transform-origin:0 0;">0,00 €</div>
<div class="t" style="left:2303.32px;top:845.38px;font-size:22px;font-weight:400;color:#323c4c;letter-spacing:0.000px;transform:scaleX(0.9127);transform-origin:0 0;">0,00 €</div>
<div class="t" style="left:3092.66px;top:845.38px;font-size:22px;font-weight:400;color:#323c4c;letter-spacing:0.000px;transform:scaleX(0.9127);transform-origin:0 0;">134.156,19 €</div>
<div class="t" style="left:3508.95px;top:845.38px;font-size:22px;font-weight:400;color:#323c4c;letter-spacing:0.000px;transform:scaleX(0.9127);transform-origin:0 0;">48.037,22 €</div>
<div class="a" style="left:2661.375px;top:835.3px;width:160px;height:43.7px;border:1.3px solid #86efac;border-radius:13px;background:#dcfce7"></div>
<div class="t" style="left:2684.43px;top:846.37px;font-size:20px;font-weight:700;color:#dc2626;letter-spacing:0.000px;transform:scaleX(0.9716);transform-origin:0 0;color:#059669;">+71.350,05 €</div>
<div class="t" style="left:218.00px;top:922.43px;font-size:23.3px;font-weight:700;color:#111827;letter-spacing:0.000px;transform:scaleX(0.8674);transform-origin:0 0;">Junio</div>
<div class="t" style="left:631.06px;top:922.68px;font-size:23px;font-weight:700;color:#1e293b;letter-spacing:0.000px;transform:scaleX(0.9706);transform-origin:0 0;">29.263,22 €</div>
<div class="t" style="left:1035.23px;top:922.68px;font-size:23px;font-weight:700;color:#1e293b;letter-spacing:0.000px;transform:scaleX(0.9706);transform-origin:0 0;">110.358,56 €</div>
<div class="t" style="left:1452.40px;top:921.93px;font-size:22px;font-weight:400;color:#323c4c;letter-spacing:0.000px;transform:scaleX(0.9127);transform-origin:0 0;">110.358,56 €</div>
<div class="t" style="left:1893.07px;top:921.93px;font-size:22px;font-weight:400;color:#323c4c;letter-spacing:0.000px;transform:scaleX(0.9127);transform-origin:0 0;">0,00 €</div>
<div class="t" style="left:2303.32px;top:921.93px;font-size:22px;font-weight:400;color:#323c4c;letter-spacing:0.000px;transform:scaleX(0.9127);transform-origin:0 0;">0,00 €</div>
<div class="t" style="left:3107.07px;top:921.93px;font-size:22px;font-weight:400;color:#323c4c;letter-spacing:0.000px;transform:scaleX(0.9127);transform-origin:0 0;">3640,91 €</div>
<div class="t" style="left:3508.95px;top:921.93px;font-size:22px;font-weight:400;color:#323c4c;letter-spacing:0.000px;transform:scaleX(0.9127);transform-origin:0 0;">47.828,91 €</div>
<div class="a" style="left:2661.375px;top:911.8499999999999px;width:160px;height:43.7px;border:1.3px solid #fca5a5;border-radius:13px;background:#fee2e2"></div>
<div class="t" style="left:2686.87px;top:922.92px;font-size:20px;font-weight:700;color:#dc2626;letter-spacing:0.000px;transform:scaleX(0.9716);transform-origin:0 0;color:#dc2626;">-81.095,34 €</div>
<div class="t" style="left:218.00px;top:998.98px;font-size:23.3px;font-weight:700;color:#111827;letter-spacing:0.000px;transform:scaleX(0.8674);transform-origin:0 0;">Julio</div>
<div class="t" style="left:631.06px;top:999.23px;font-size:23px;font-weight:700;color:#1e293b;letter-spacing:0.000px;transform:scaleX(0.9706);transform-origin:0 0;">35.544,80 €</div>
<div class="t" style="left:1041.31px;top:999.23px;font-size:23px;font-weight:700;color:#1e293b;letter-spacing:0.000px;transform:scaleX(0.9706);transform-origin:0 0;">50.491,00 €</div>
<div class="t" style="left:1457.70px;top:998.48px;font-size:22px;font-weight:400;color:#323c4c;letter-spacing:0.000px;transform:scaleX(0.9127);transform-origin:0 0;">50.491,00 €</div>
<div class="t" style="left:1893.07px;top:998.48px;font-size:22px;font-weight:400;color:#323c4c;letter-spacing:0.000px;transform:scaleX(0.9127);transform-origin:0 0;">0,00 €</div>
<div class="t" style="left:2303.32px;top:998.48px;font-size:22px;font-weight:400;color:#323c4c;letter-spacing:0.000px;transform:scaleX(0.9127);transform-origin:0 0;">0,00 €</div>
<div class="t" style="left:3098.70px;top:998.48px;font-size:22px;font-weight:400;color:#323c4c;letter-spacing:0.000px;transform:scaleX(0.9127);transform-origin:0 0;">35.544,80 €</div>
<div class="t" style="left:3508.95px;top:998.48px;font-size:22px;font-weight:400;color:#323c4c;letter-spacing:0.000px;transform:scaleX(0.9127);transform-origin:0 0;">56.898,71 €</div>
<div class="a" style="left:2661.375px;top:988.3999999999999px;width:160px;height:43.7px;border:1.3px solid #fca5a5;border-radius:13px;background:#fee2e2"></div>
<div class="t" style="left:2686.87px;top:999.47px;font-size:20px;font-weight:700;color:#dc2626;letter-spacing:0.000px;transform:scaleX(0.9716);transform-origin:0 0;color:#dc2626;">-14.946,20 €</div>
<div class="t" style="left:218.00px;top:1075.53px;font-size:23.3px;font-weight:700;color:#111827;letter-spacing:0.000px;transform:scaleX(0.8674);transform-origin:0 0;">Agosto</div>
<div class="t" style="left:631.06px;top:1075.78px;font-size:23px;font-weight:700;color:#1e293b;letter-spacing:0.000px;transform:scaleX(0.9706);transform-origin:0 0;">24.672,00 €</div>
<div class="t" style="left:1041.31px;top:1075.78px;font-size:23px;font-weight:700;color:#1e293b;letter-spacing:0.000px;transform:scaleX(0.9706);transform-origin:0 0;">32.014,04 €</div>
<div class="t" style="left:1457.70px;top:1075.03px;font-size:22px;font-weight:400;color:#323c4c;letter-spacing:0.000px;transform:scaleX(0.9127);transform-origin:0 0;">32.014,04 €</div>
<div class="t" style="left:1893.07px;top:1075.03px;font-size:22px;font-weight:400;color:#323c4c;letter-spacing:0.000px;transform:scaleX(0.9127);transform-origin:0 0;">0,00 €</div>
<div class="t" style="left:2303.32px;top:1075.03px;font-size:22px;font-weight:400;color:#323c4c;letter-spacing:0.000px;transform:scaleX(0.9127);transform-origin:0 0;">0,00 €</div>
<div class="t" style="left:3098.24px;top:1075.03px;font-size:22px;font-weight:400;color:#323c4c;letter-spacing:0.000px;transform:scaleX(0.9127);transform-origin:0 0;">17.053,12 €</div>
<div class="t" style="left:3508.49px;top:1075.03px;font-size:22px;font-weight:400;color:#323c4c;letter-spacing:0.000px;transform:scaleX(0.9127);transform-origin:0 0;">15.037,45 €</div>
<div class="a" style="left:2661.375px;top:1064.95px;width:160px;height:43.7px;border:1.3px solid #fca5a5;border-radius:13px;background:#fee2e2"></div>
<div class="t" style="left:2694.97px;top:1076.02px;font-size:20px;font-weight:700;color:#dc2626;letter-spacing:0.000px;transform:scaleX(0.9716);transform-origin:0 0;color:#dc2626;">-7342,04 €</div>
<div class="t" style="left:218.00px;top:1152.08px;font-size:23.3px;font-weight:700;color:#111827;letter-spacing:0.000px;transform:scaleX(0.8674);transform-origin:0 0;">Septiembre</div>
<div class="t" style="left:630.57px;top:1152.33px;font-size:23px;font-weight:700;color:#1e293b;letter-spacing:0.000px;transform:scaleX(0.9706);transform-origin:0 0;">12.437,00 €</div>
<div class="t" style="left:1040.82px;top:1152.33px;font-size:23px;font-weight:700;color:#1e293b;letter-spacing:0.000px;transform:scaleX(0.9706);transform-origin:0 0;">16.151,05 €</div>
<div class="t" style="left:1457.24px;top:1151.58px;font-size:22px;font-weight:400;color:#323c4c;letter-spacing:0.000px;transform:scaleX(0.9127);transform-origin:0 0;">16.151,05 €</div>
<div class="t" style="left:1893.07px;top:1151.58px;font-size:22px;font-weight:400;color:#323c4c;letter-spacing:0.000px;transform:scaleX(0.9127);transform-origin:0 0;">0,00 €</div>
<div class="t" style="left:2303.32px;top:1151.58px;font-size:22px;font-weight:400;color:#323c4c;letter-spacing:0.000px;transform:scaleX(0.9127);transform-origin:0 0;">0,00 €</div>
<div class="t" style="left:3098.24px;top:1151.58px;font-size:22px;font-weight:400;color:#323c4c;letter-spacing:0.000px;transform:scaleX(0.9127);transform-origin:0 0;">15.048,77 €</div>
<div class="t" style="left:3516.86px;top:1151.58px;font-size:22px;font-weight:400;color:#323c4c;letter-spacing:0.000px;transform:scaleX(0.9127);transform-origin:0 0;">1493,14 €</div>
<div class="a" style="left:2661.375px;top:1141.4999999999998px;width:160px;height:43.7px;border:1.3px solid #fca5a5;border-radius:13px;background:#fee2e2"></div>
<div class="t" style="left:2694.97px;top:1152.57px;font-size:20px;font-weight:700;color:#dc2626;letter-spacing:0.000px;transform:scaleX(0.9716);transform-origin:0 0;color:#dc2626;">-3714,05 €</div>
<div class="t" style="left:218.00px;top:1228.63px;font-size:23.3px;font-weight:700;color:#111827;letter-spacing:0.000px;transform:scaleX(0.8674);transform-origin:0 0;">Octubre</div>
<div class="t" style="left:630.57px;top:1228.88px;font-size:23px;font-weight:700;color:#1e293b;letter-spacing:0.000px;transform:scaleX(0.9706);transform-origin:0 0;">17.047,00 €</div>
<div class="t" style="left:1041.31px;top:1228.88px;font-size:23px;font-weight:700;color:#1e293b;letter-spacing:0.000px;transform:scaleX(0.9706);transform-origin:0 0;">38.931,51 €</div>
<div class="t" style="left:1457.70px;top:1228.13px;font-size:22px;font-weight:400;color:#323c4c;letter-spacing:0.000px;transform:scaleX(0.9127);transform-origin:0 0;">37.803,54 €</div>
<div class="t" style="left:1876.61px;top:1228.13px;font-size:22px;font-weight:400;color:#323c4c;letter-spacing:0.000px;transform:scaleX(0.9127);transform-origin:0 0;">1127,97 €</div>
<div class="t" style="left:2303.32px;top:1228.13px;font-size:22px;font-weight:400;color:#323c4c;letter-spacing:0.000px;transform:scaleX(0.9127);transform-origin:0 0;">0,00 €</div>
<div class="t" style="left:3112.20px;top:1228.13px;font-size:22px;font-weight:400;color:#323c4c;letter-spacing:0.000px;transform:scaleX(0.9127);transform-origin:0 0;">148,83 €</div>
<div class="t" style="left:3516.86px;top:1228.13px;font-size:22px;font-weight:400;color:#323c4c;letter-spacing:0.000px;transform:scaleX(0.9127);transform-origin:0 0;">1364,86 €</div>
<div class="a" style="left:2661.375px;top:1218.05px;width:160px;height:43.7px;border:1.3px solid #fca5a5;border-radius:13px;background:#fee2e2"></div>
<div class="t" style="left:2686.87px;top:1229.12px;font-size:20px;font-weight:700;color:#dc2626;letter-spacing:0.000px;transform:scaleX(0.9716);transform-origin:0 0;color:#dc2626;">-21.884,51 €</div>
<div class="t" style="left:217.13px;top:1305.18px;font-size:23.3px;font-weight:700;color:#111827;letter-spacing:0.000px;transform:scaleX(0.8674);transform-origin:0 0;">Noviembre</div>
<div class="t" style="left:631.06px;top:1305.43px;font-size:23px;font-weight:700;color:#1e293b;letter-spacing:0.000px;transform:scaleX(0.9706);transform-origin:0 0;">55.059,31 €</div>
<div class="t" style="left:1050.62px;top:1305.43px;font-size:23px;font-weight:700;color:#1e293b;letter-spacing:0.000px;transform:scaleX(0.9706);transform-origin:0 0;">3579,00 €</div>
<div class="t" style="left:1466.07px;top:1304.68px;font-size:22px;font-weight:400;color:#323c4c;letter-spacing:0.000px;transform:scaleX(0.9127);transform-origin:0 0;">3579,00 €</div>
<div class="t" style="left:1893.07px;top:1304.68px;font-size:22px;font-weight:400;color:#323c4c;letter-spacing:0.000px;transform:scaleX(0.9127);transform-origin:0 0;">0,00 €</div>
<div class="t" style="left:2303.32px;top:1304.68px;font-size:22px;font-weight:400;color:#323c4c;letter-spacing:0.000px;transform:scaleX(0.9127);transform-origin:0 0;">0,00 €</div>
<div class="t" style="left:3098.24px;top:1304.68px;font-size:22px;font-weight:400;color:#323c4c;letter-spacing:0.000px;transform:scaleX(0.9127);transform-origin:0 0;">60.318,30 €</div>
<div class="t" style="left:3516.86px;top:1304.68px;font-size:22px;font-weight:400;color:#323c4c;letter-spacing:0.000px;transform:scaleX(0.9127);transform-origin:0 0;">2837,45 €</div>
<div class="a" style="left:2661.375px;top:1294.6px;width:160px;height:43.7px;border:1.3px solid #86efac;border-radius:13px;background:#dcfce7"></div>
<div class="t" style="left:2684.43px;top:1305.67px;font-size:20px;font-weight:700;color:#dc2626;letter-spacing:0.000px;transform:scaleX(0.9716);transform-origin:0 0;color:#059669;">+51.480,31 €</div>
<div class="t" style="left:217.13px;top:1381.73px;font-size:23.3px;font-weight:700;color:#111827;letter-spacing:0.000px;transform:scaleX(0.8674);transform-origin:0 0;">Diciembre</div>
<div class="t" style="left:631.06px;top:1381.98px;font-size:23px;font-weight:700;color:#1e293b;letter-spacing:0.000px;transform:scaleX(0.9706);transform-origin:0 0;">77.050,19 €</div>
<div class="t" style="left:1041.31px;top:1381.98px;font-size:23px;font-weight:700;color:#1e293b;letter-spacing:0.000px;transform:scaleX(0.9706);transform-origin:0 0;">23.578,00 €</div>
<div class="t" style="left:1457.24px;top:1381.23px;font-size:22px;font-weight:400;color:#323c4c;letter-spacing:0.000px;transform:scaleX(0.9127);transform-origin:0 0;">23.578,00 €</div>
<div class="t" style="left:1893.07px;top:1381.23px;font-size:22px;font-weight:400;color:#323c4c;letter-spacing:0.000px;transform:scaleX(0.9127);transform-origin:0 0;">0,00 €</div>
<div class="t" style="left:2303.32px;top:1381.23px;font-size:22px;font-weight:400;color:#323c4c;letter-spacing:0.000px;transform:scaleX(0.9127);transform-origin:0 0;">0,00 €</div>
<div class="t" style="left:3107.07px;top:1381.23px;font-size:22px;font-weight:400;color:#323c4c;letter-spacing:0.000px;transform:scaleX(0.9127);transform-origin:0 0;">4176,92 €</div>
<div class="t" style="left:3534.07px;top:1381.23px;font-size:22px;font-weight:400;color:#323c4c;letter-spacing:0.000px;transform:scaleX(0.9127);transform-origin:0 0;">0,00 €</div>
<div class="a" style="left:2661.375px;top:1371.1499999999999px;width:160px;height:43.7px;border:1.3px solid #86efac;border-radius:13px;background:#dcfce7"></div>
<div class="t" style="left:2684.43px;top:1382.22px;font-size:20px;font-weight:700;color:#dc2626;letter-spacing:0.000px;transform:scaleX(0.9716);transform-origin:0 0;color:#059669;">+53.472,19 €</div>
<div class="t" style="left:217.14px;top:1459.68px;font-size:24px;font-weight:700;color:#475569;letter-spacing:5.128px;transform:scaleX(0.8600);transform-origin:0 0;">MEDIA</div>
<div class="t" style="left:626.42px;top:1458.84px;font-size:25px;font-weight:700;color:#475569;letter-spacing:0.000px;transform:scaleX(0.9640);transform-origin:0 0;">34.592,96 €</div>
<div class="t" style="left:1036.67px;top:1458.84px;font-size:25px;font-weight:700;color:#475569;letter-spacing:0.000px;transform:scaleX(0.9640);transform-origin:0 0;">36.979,38 €</div>
<div class="t" style="left:1455.28px;top:1459.88px;font-size:21.4px;font-weight:700;color:#475569;letter-spacing:0.000px;transform:scaleX(0.9787);transform-origin:0 0;">36.885,38 €</div>
<div class="t" style="left:1885.90px;top:1459.88px;font-size:21.4px;font-weight:700;color:#475569;letter-spacing:0.000px;transform:scaleX(0.9787);transform-origin:0 0;">94,00 €</div>
<div class="t" style="left:2301.97px;top:1459.88px;font-size:21.4px;font-weight:700;color:#475569;letter-spacing:0.000px;transform:scaleX(0.9787);transform-origin:0 0;">0,00 €</div>
<div class="t" style="left:3096.28px;top:1459.88px;font-size:21.4px;font-weight:700;color:#475569;letter-spacing:0.000px;transform:scaleX(0.9787);transform-origin:0 0;">23.918,65 €</div>
<div class="t" style="left:3506.53px;top:1459.88px;font-size:21.4px;font-weight:700;color:#475569;letter-spacing:0.000px;transform:scaleX(0.9787);transform-origin:0 0;">20.287,95 €</div>
<div class="a" style="left:2661.375px;top:1450.3px;width:160px;height:43.5px;border:1.3px solid #fca5a5;border-radius:13px;background:#fee2e2"></div>
<div class="t" style="left:2694.97px;top:1461.57px;font-size:20px;font-weight:700;color:#dc2626;letter-spacing:0.000px;transform:scaleX(0.9716);transform-origin:0 0;">-2386,41 €</div>
<div class="t" style="left:218.00px;top:1537.99px;font-size:26px;font-weight:700;color:#ffffff;letter-spacing:4.073px;transform:scaleX(0.8600);transform-origin:0 0;">TOTALES</div>
<div class="t" style="left:614.38px;top:1538.50px;font-size:25.4px;font-weight:700;color:#ffffff;letter-spacing:0.434px;">415.115,57 €</div>
<div class="t" style="left:1023.90px;top:1538.50px;font-size:25.4px;font-weight:700;color:#ffffff;letter-spacing:0.438px;">443.752,55 €</div>
<div class="t" style="left:1434.15px;top:1538.50px;font-size:25.4px;font-weight:700;color:#ffffff;letter-spacing:0.438px;">442.624,58 €</div>
<div class="t" style="left:1862.86px;top:1538.50px;font-size:25.4px;font-weight:700;color:#ffffff;letter-spacing:0.449px;">1127,97 €</div>
<div class="t" style="left:2294.26px;top:1538.50px;font-size:25.4px;font-weight:700;color:#ffffff;letter-spacing:0.452px;">0,00 €</div>
<div class="t" style="left:3075.15px;top:1538.50px;font-size:25.4px;font-weight:700;color:#ffffff;letter-spacing:0.438px;">287.023,75 €</div>
<div class="t" style="left:3485.40px;top:1538.50px;font-size:25.4px;font-weight:700;color:#ffffff;letter-spacing:0.438px;">243.455,37 €</div>
<div class="a" style="left:2661.375px;top:1529px;width:160px;height:43.5px;border:1.3px solid #fca5a5;border-radius:13px;background:#fee2e2"></div>
<div class="t" style="left:2686.87px;top:1540.37px;font-size:20px;font-weight:700;color:#dc2626;letter-spacing:0.000px;transform:scaleX(0.9716);transform-origin:0 0;">-28.636,98 €</div>
<div class="a" style="left:3814px;top:1736px;width:26px;height:26px;background:radial-gradient(circle at 4px 4px,rgba(255,255,255,0) 0,rgba(255,255,255,0) 21.3px,#050a06 22.3px,#17331f 23.6px)"></div>
</body></html>
